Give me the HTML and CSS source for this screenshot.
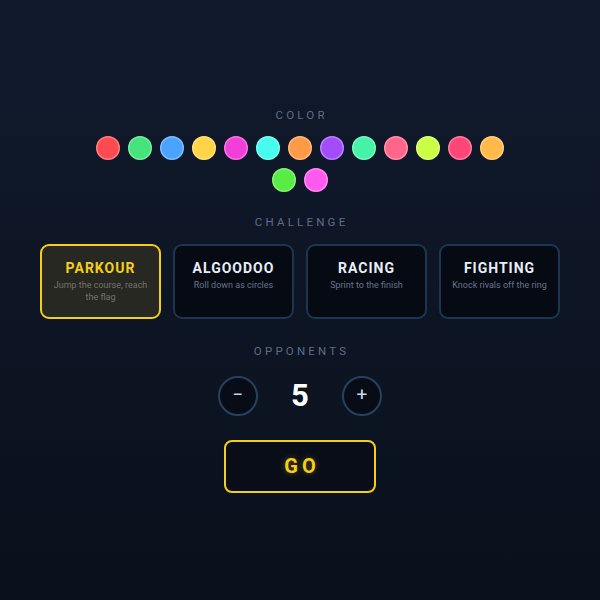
FILE: index.html
```html
<!DOCTYPE html>
<html lang="en">
<head>
<meta charset="utf-8">
<title>Game Setup</title>
<link rel="stylesheet" href="styles.css">
</head>
<body>
<main class="setup">
  <div class="label label-color">COLOR</div>
  <div class="swatches">
    <button class="swatch c1"></button>
    <button class="swatch c2"></button>
    <button class="swatch c3"></button>
    <button class="swatch c4"></button>
    <button class="swatch c5"></button>
    <button class="swatch c6"></button>
    <button class="swatch c7"></button>
    <button class="swatch c8"></button>
    <button class="swatch c9"></button>
    <button class="swatch c10"></button>
    <button class="swatch c11"></button>
    <button class="swatch c12"></button>
    <button class="swatch c13"></button>
    <button class="swatch c14"></button>
    <button class="swatch c15"></button>
  </div>

  <div class="label label-challenge">CHALLENGE</div>
  <div class="cards">
    <div class="card selected">
      <div class="card-title">PARKOUR</div>
      <div class="card-desc">Jump the course, reach the flag</div>
    </div>
    <div class="card">
      <div class="card-title">ALGOODOO</div>
      <div class="card-desc">Roll down as circles</div>
    </div>
    <div class="card">
      <div class="card-title">RACING</div>
      <div class="card-desc">Sprint to the finish</div>
    </div>
    <div class="card">
      <div class="card-title">FIGHTING</div>
      <div class="card-desc">Knock rivals off the ring</div>
    </div>
  </div>

  <div class="label label-opp">OPPONENTS</div>
  <div class="stepper">
    <button class="step-btn">−</button>
    <div class="count">5</div>
    <button class="step-btn">+</button>
  </div>

  <button class="go">GO</button>
</main>
</body>
</html>
```

FILE: styles.css
```css
* { box-sizing: border-box; }

html, body {
  margin: 0;
  padding: 0;
  height: 100%;
}

body {
  background: linear-gradient(180deg, #111a2d 0%, #0d1524 55%, #0a101b 100%);
  font-family: Roboto, "Liberation Sans", sans-serif;
  color: #e8edf5;
}

.setup {
  height: 600px;
  display: flex;
  flex-direction: column;
  align-items: center;
  justify-content: center;
}

.label {
  font-size: 11.5px;
  line-height: 14px;
  letter-spacing: 3.2px;
  padding-left: 3.2px;
  color: #5f6d87;
  font-weight: 400;
}

.label-color { margin-bottom: 14px; }
.label-challenge { margin-top: 23px; margin-bottom: 15px; }
.label-opp { margin-top: 25px; margin-bottom: 18px; }

.swatches {
  width: 420px;
  display: flex;
  flex-wrap: wrap;
  justify-content: center;
  gap: 8px;
}

.swatch {
  width: 24px;
  height: 24px;
  border-radius: 50%;
  border: none;
  padding: 0;
  box-shadow: inset 0 0 0 1.5px rgba(255, 255, 255, 0.28);
}

.c1 { background: #ff4b4f; }
.c2 { background: #45e37c; }
.c3 { background: #4aa3ff; }
.c4 { background: #ffd447; }
.c5 { background: #f23fd9; }
.c6 { background: #45fcef; }
.c7 { background: #ff9a47; }
.c8 { background: #a24dfc; }
.c9 { background: #45f2a7; }
.c10 { background: #ff6689; }
.c11 { background: #cbfd45; }
.c12 { background: #ff4777; }
.c13 { background: #ffba4a; }
.c14 { background: #58ec45; }
.c15 { background: #ff5af0; }

.cards {
  display: flex;
  gap: 12px;
}

.card {
  width: 121px;
  height: 75px;
  border: 2px solid #1d3551;
  border-radius: 9px;
  background: #060a13;
  padding: 13px 8px 0;
  text-align: center;
}

.card.selected {
  border-color: #f5cd1c;
  background: #272822;
}

.card-title {
  font-size: 14px;
  line-height: 18px;
  font-weight: 700;
  letter-spacing: 1px;
  color: #e9eef6;
}

.card.selected .card-title { color: #f5cd1c; }

.card-desc {
  margin-top: 2px;
  font-size: 9px;
  line-height: 12px;
  color: #66758b;
}

.card.selected .card-desc { color: #74746a; }

.stepper {
  display: flex;
  align-items: center;
}

.step-btn {
  width: 40px;
  height: 40px;
  border-radius: 50%;
  border: 2px solid #264260;
  background: #070c16;
  color: #cdd6ea;
  font-family: Roboto, "Liberation Sans", sans-serif;
  font-size: 19px;
  line-height: 1;
  padding: 0 0 2px;
  display: flex;
  align-items: center;
  justify-content: center;
}

.count {
  width: 84px;
  text-align: center;
  font-size: 31px;
  font-weight: 700;
  color: #ffffff;
  line-height: 40px;
}

.go {
  margin-top: 24px;
  width: 152px;
  height: 53px;
  border: 2px solid #f5cd1c;
  border-radius: 8px;
  background: #080d17;
  color: #f5cd1c;
  font-family: Roboto, "Liberation Sans", sans-serif;
  font-size: 20px;
  font-weight: 700;
  letter-spacing: 4px;
  padding: 0 0 0 4px;
  text-shadow: 0 0 6px rgba(245, 205, 28, 0.35);
}
```
